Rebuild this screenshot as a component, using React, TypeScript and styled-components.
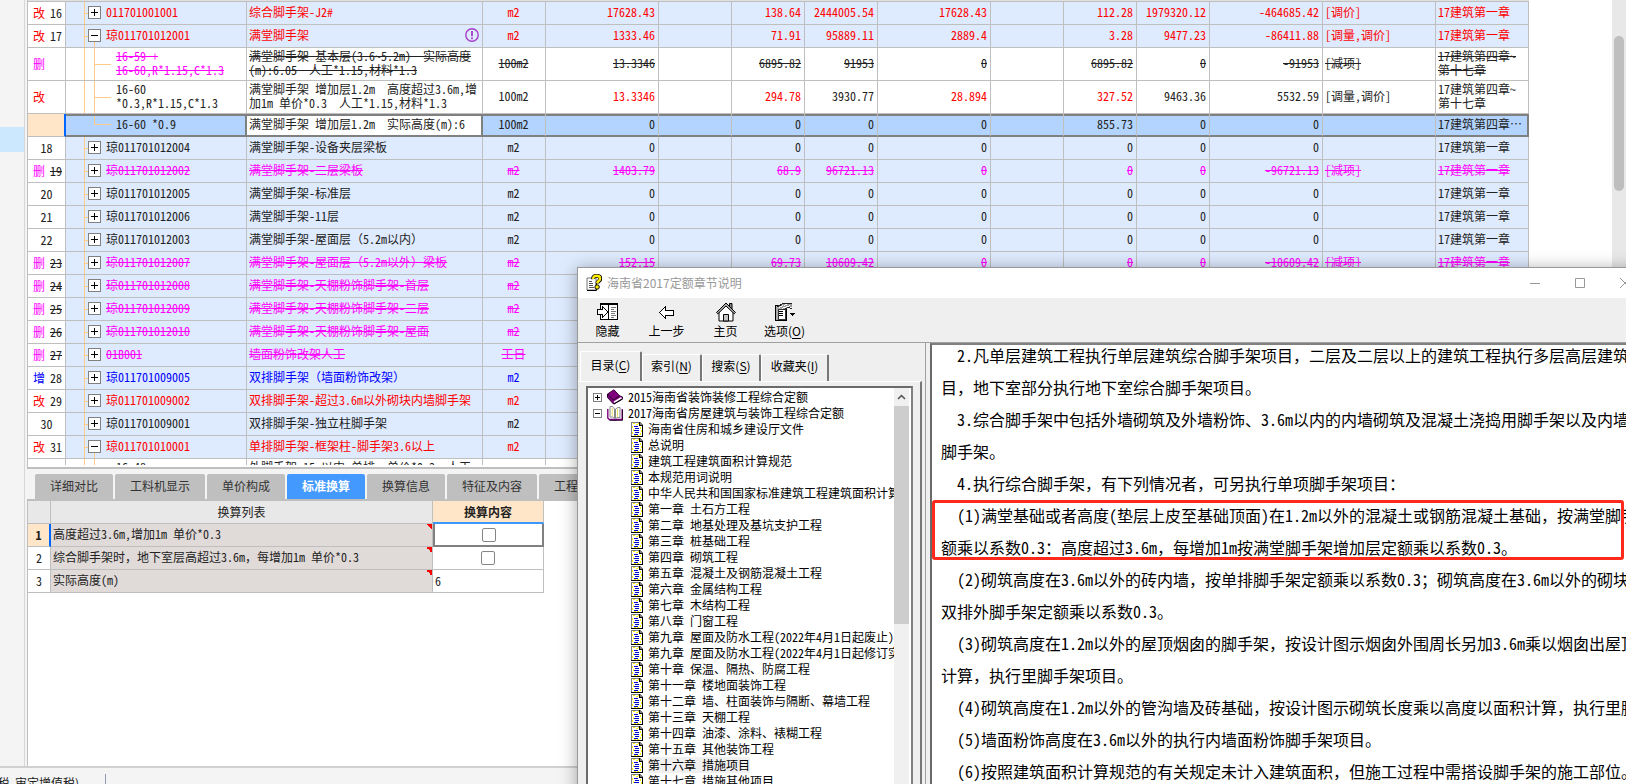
import React from "react";
import styled, { createGlobalStyle, css } from "styled-components";

const LINE = "#bfbfbf";
const DARK = "#808080";
const RED = "#ff0000";
const PINK = "#ff00ff";
const BLUE = "#0000ff";
const INK = "#222222";

const GlobalStyle = createGlobalStyle`
  * { box-sizing: border-box; }
  body {
    margin: 0;
    overflow: hidden;
    background: #f4f4f4;
    color: ${INK};
    font: 12px/14px "Noto Sans CJK SC", sans-serif;
    text-spacing-trim: space-all;
  }
  button, input { font: inherit; color: inherit; padding: 0; margin: 0; }
`;

/* Full-width punctuation keeps its full cell inside half-width Latin text. */
const Wide = styled.span`
  font-feature-settings: normal;
`;

function Txt({ children }: { children: string }) {
  return (
    <>
      {children.split(/([，（）；：]+)/).map((part, i) =>
        i % 2 ? <Wide key={i}>{part}</Wide> : part
      )}
    </>
  );
}

const Root = styled.div`
  position: relative;
  height: 100vh;
  overflow: hidden;
  display: flex;
  flex-direction: column;
`;

const Body = styled.div`
  flex: 1;
  min-height: 0;
  display: flex;
`;

const Gutter = styled.aside`
  width: 25px;
  flex: none;
  padding-top: 127px;
  border-right: 1px solid #d6d6d6;
`;

const GutterMark = styled.div`
  height: 25px;
  background: #cce8ff;
`;

const Main = styled.main`
  flex: 1;
  min-width: 0;
  margin-left: 2px;
  display: flex;
  flex-direction: column;
`;

const TopPane = styled.section`
  flex: 1;
  min-height: 0;
  display: flex;
  background: #fff;
  border-left: 1px solid ${LINE};
  border-bottom: 2px solid ${LINE};
`;

const GridView = styled.div`
  flex: 1;
  min-width: 0;
  overflow: hidden;
  border-bottom: 2px solid #fff;
`;

const GridTop = styled.div`
  width: 1501px;
  height: 1px;
  background: #e0e0e0;
`;

const VScroll = styled.div`
  width: 14px;
  flex: none;
  padding: 36px 2px 0;
  background: #e8e8e8;
`;

const VThumb = styled.div`
  height: 155px;
  border-radius: 5px;
  background: #bebebe;
`;

const Grid = styled.table`
  table-layout: fixed;
  width: 1501px;
  border-collapse: separate;
  border-spacing: 0;
  border-top: 1px solid ${LINE};
  font-feature-settings: "hwid";
`;

type RowKind = "item" | "child" | "selected";

const Row = styled.tr<{ $kind: RowKind }>`
  height: ${(p) => (p.$kind === "child" ? 33 : 23)}px;
  background: ${(p) =>
    p.$kind === "item" ? "#deeafe" : p.$kind === "child" ? "#fff" : "#b2d4ff"};
`;

const Cell = styled.td<{
  $align?: string;
  $color?: string;
  $strike?: boolean;
  $sel?: boolean;
  $white?: boolean;
}>`
  padding: 0 3px 2px 2px;
  border-right: 1px solid ${LINE};
  border-bottom: 1px solid ${LINE};
  overflow: hidden;
  white-space: pre;
  text-align: ${(p) => p.$align || "left"};
  color: ${(p) => p.$color || INK};
  text-decoration: ${(p) => (p.$strike ? "line-through" : "none")};
  ${(p) =>
    p.$sel &&
    css`
      border-bottom: 2px solid ${DARK};
      box-shadow: inset 0 2px ${DARK};
      &:last-child { border-right: 2px solid ${DARK}; }
    `}
  ${(p) =>
    p.$white &&
    css`
      background: #fff;
      border-right: 2px solid ${DARK};
    `}
`;

const NumCell = styled.th<{ $active?: boolean; $marked?: boolean }>`
  padding: 0 0 1px ${(p) => (p.$marked ? 5 : 0)}px;
  border-right: 1px solid ${LINE};
  border-bottom: 1px solid ${LINE};
  background: #fff;
  font-weight: 400;
  text-align: ${(p) => (p.$marked ? "left" : "center")};
  ${(p) =>
    p.$active &&
    css`
      background: #ffe6c8;
      border-right: 2px solid #0066ff;
    `}
`;

const Marker = styled.span<{ $color: string }>`
  margin-right: 5px;
  color: ${(p) => p.$color};
`;

const Num = styled.span<{ $strike?: boolean }>`
  text-decoration: ${(p) => (p.$strike ? "line-through" : "none")};
`;

/* The tree rails are painted as cell backgrounds: a trunk at 18px, a branch at 28px. */
const RAIL = "linear-gradient(#ffcc88, #ffcc88)";

const TreeCell = styled(Cell)<{ $rail: "leaf" | "open" | "child" | "last" }>`
  padding-left: ${(p) => (p.$rail === "leaf" || p.$rail === "open" ? 22 : 50)}px;
  background-repeat: no-repeat;
  ${(p) =>
    p.$sel &&
    css`
      border-right: 2px solid ${DARK};
    `}
  ${(p) =>
    p.$rail === "leaf" &&
    css`
      background-image: ${RAIL}, ${RAIL};
      background-size: 1px 100%, 4px 1px;
      background-position: 18px 0, 18px 50%;
    `}
  ${(p) =>
    p.$rail === "open" &&
    css`
      background-image: ${RAIL}, ${RAIL}, ${RAIL};
      background-size: 1px 100%, 4px 1px, 1px 50%;
      background-position: 18px 0, 18px 50%, 28px 100%;
    `}
  ${(p) =>
    p.$rail === "child" &&
    css`
      background-image: ${RAIL}, ${RAIL}, ${RAIL};
      background-size: 1px 100%, 17px 1px, 1px 100%;
      background-position: 18px 0, 28px 50%, 28px 0;
    `}
  ${(p) =>
    p.$rail === "last" &&
    css`
      background-image: ${RAIL}, ${RAIL};
      background-size: 17px 1px, 1px 50%;
      background-position: 28px 50%, 28px 0;
    `}
`;

const TreeLabel = styled.div`
  display: flex;
  align-items: center;
  gap: 5px;
`;

const NameLine = styled.div`
  display: flex;
  align-items: center;
  justify-content: space-between;
`;

const Expander = styled.button<{ $size: number }>`
  width: ${(p) => p.$size}px;
  height: ${(p) => p.$size}px;
  flex: none;
  display: block;
  border: 1px solid ${DARK};
  background: #fff;
  svg { display: block; }
`;

function Toggle({ open, size = 13 }: { open: boolean; size?: number }) {
  const inner = size - 2;
  const mid = (inner - 1) / 2;
  const inset = size > 9 ? 2 : 1;
  const len = inner - inset * 2;
  return (
    <Expander $size={size} aria-label={open ? "折叠" : "展开"}>
      <svg width={inner} height={inner} shapeRendering="crispEdges">
        <rect x={inset} y={mid} width={len} height={1} fill="#000" />
        {!open && <rect x={mid} y={inset} width={1} height={len} fill="#000" />}
      </svg>
    </Expander>
  );
}

interface Item {
  mark?: string;
  no?: string;
  kind?: RowKind;
  rail?: "leaf" | "open" | "child" | "last";
  code: string;
  name: string;
  unit: string;
  vals?: string[];
  note?: string;
  chapter?: string;
  color?: string;
  codeColor?: string;
  red?: number[];
  strike?: boolean;
  warn?: boolean;
}

const ZEROS = ["0", "", "0", "0", "0", "", "0", "0", "0"];
const CH1 = "17建筑第一章";

const plain = (no: string, code: string, name: string): Item => ({
  no, code, name, unit: "m2", vals: ZEROS, chapter: CH1,
});
const removed = (no: string, code: string, name: string, rest: Partial<Item> = {}): Item => ({
  mark: "删", no, code, name, unit: "m2", color: PINK, strike: true, ...rest,
});

const items: Item[] = [
  { mark: "改", no: "16", code: "011701001001", name: "综合脚手架-J2#", unit: "m2", color: RED,
    vals: ["17628.43", "", "138.64", "2444005.54", "17628.43", "", "112.28", "1979320.12", "-464685.42"],
    note: "[调价]", chapter: CH1 },
  { mark: "改", no: "17", rail: "open", code: "琼011701012001", name: "满堂脚手架", unit: "m2", color: RED, warn: true,
    vals: ["1333.46", "", "71.91", "95889.11", "2889.4", "", "3.28", "9477.23", "-86411.88"],
    note: "[调量,调价]", chapter: CH1 },
  { mark: "删", kind: "child", rail: "child", code: "16-59 +\n16-60,R*1.15,C*1.3", codeColor: PINK, strike: true,
    name: "满堂脚手架 基本层(3.6~5.2m)  实际高度\n(m):6.05  人工*1.15,材料*1.3", unit: "100m2",
    vals: ["13.3346", "", "6895.82", "91953", "0", "", "6895.82", "0", "-91953"],
    note: "[减项]", chapter: "17建筑第四章~\n第十七章" },
  { mark: "改", kind: "child", rail: "child", code: "16-60\n*0.3,R*1.15,C*1.3",
    name: "满堂脚手架 增加层1.2m  高度超过3.6m,增\n加1m 单价*0.3  人工*1.15,材料*1.3", unit: "100m2",
    vals: ["13.3346", "", "294.78", "3930.77", "28.894", "", "327.52", "9463.36", "5532.59"],
    red: [0, 2, 4, 6], note: "[调量,调价]", chapter: "17建筑第四章~\n第十七章" },
  { kind: "selected", rail: "last", code: "16-60 *0.9", name: "满堂脚手架 增加层1.2m  实际高度(m):6", unit: "100m2",
    vals: ["0", "", "0", "0", "0", "", "855.73", "0", "0"], chapter: "17建筑第四章…" },
  plain("18", "琼011701012004", "满堂脚手架-设备夹层梁板"),
  removed("19", "琼011701012002", "满堂脚手架-二层梁板", {
    vals: ["1403.79", "", "68.9", "96721.13", "0", "", "0", "0", "-96721.13"],
    note: "[减项]", chapter: CH1 }),
  plain("20", "琼011701012005", "满堂脚手架-标准层"),
  plain("21", "琼011701012006", "满堂脚手架-11层"),
  plain("22", "琼011701012003", "满堂脚手架-屋面层（5.2m以内）"),
  removed("23", "琼011701012007", "满堂脚手架-屋面层（5.2m以外）梁板", {
    vals: ["152.15", "", "69.73", "10609.42", "0", "", "0", "0", "-10609.42"],
    note: "[减项]", chapter: CH1 }),
  removed("24", "琼011701012008", "满堂脚手架-天棚粉饰脚手架-首层"),
  removed("25", "琼011701012009", "满堂脚手架-天棚粉饰脚手架-二层"),
  removed("26", "琼011701012010", "满堂脚手架-天棚粉饰脚手架-屋面"),
  removed("27", "01B001", "墙面粉饰改架人工", { unit: "工日" }),
  { mark: "增", no: "28", code: "琼011701009005", name: "双排脚手架（墙面粉饰改架）", unit: "m2", color: BLUE },
  { mark: "改", no: "29", code: "琼011701009002", name: "双排脚手架-超过3.6m以外砌块内墙脚手架", unit: "m2", color: RED },
  { no: "30", code: "琼011701009001", name: "双排脚手架-独立柱脚手架", unit: "m2" },
  { mark: "改", no: "31", rail: "open", code: "琼011701010001", name: "单排脚手架-框架柱-脚手架3.6以上", unit: "m2", color: RED },
  { kind: "child", rail: "child", code: "16-48\n*0.3", name: "外脚手架 15m以内 单排  单价*0.3  人工\n*1.15", unit: "" },
];

const colWidths = [38, 181, 236, 63, 113, 73, 73, 73, 113, 73, 73, 73, 113, 113, 93];
const markColors: Record<string, string> = { 改: RED, 删: PINK, 增: BLUE };

function WarnIcon() {
  return (
    <svg width="14" height="14" viewBox="0 0 14 14" fill="none" stroke="#a63cc8">
      <circle cx="7" cy="7" r="6.2" strokeWidth="1.4" />
      <path d="M7 3v5.2M7 9.6v1.6" strokeWidth="1.8" />
    </svg>
  );
}

function ItemRow({ item }: { item: Item }) {
  const kind = item.kind || "item";
  const rail = item.rail || "leaf";
  const sel = kind === "selected";
  const vals = item.vals || Array(9).fill("");
  const common = { $sel: sel, $strike: item.strike };
  return (
    <Row $kind={kind}>
      <NumCell scope="row" $active={sel} $marked={!!item.mark}>
        {item.mark && <Marker $color={markColors[item.mark]}>{item.mark}</Marker>}
        <Num $strike={item.strike}>{item.no}</Num>
      </NumCell>
      <TreeCell {...common} $rail={rail} $color={item.codeColor || item.color}>
        {kind === "item" ? (
          <TreeLabel>
            <Toggle open={rail === "open"} />
            {item.code}
          </TreeLabel>
        ) : (
          item.code
        )}
      </TreeCell>
      <Cell {...common} $white={sel} $color={item.color}>
        {item.warn ? (
          <NameLine>
            {item.name}
            <WarnIcon />
          </NameLine>
        ) : (
          <Txt>{item.name}</Txt>
        )}
      </Cell>
      <Cell {...common} $align="center" $color={item.color}>{item.unit}</Cell>
      {vals.map((v, i) => (
        <Cell key={i} {...common} $align="right" $color={item.red?.includes(i) ? RED : item.color}>{v}</Cell>
      ))}
      <Cell {...common} $color={item.color}>{item.note}</Cell>
      <Cell {...common} $color={item.color}>{item.chapter}</Cell>
    </Row>
  );
}

/* ---------- lower pane ---------- */

const BottomPane = styled.section`
  flex: none;
  height: 297px;
  display: flex;
  flex-direction: column;
`;

const TabBar = styled.div`
  display: flex;
  gap: 2px;
  padding: 5px 0 0 8px;
`;

const PaneTab = styled.button<{ $active?: boolean }>`
  flex: none;
  height: 25px;
  padding: 0 15px 2px;
  border: 0;
  border-radius: 2px 2px 0 0;
  white-space: nowrap;
  background: ${(p) => (p.$active ? "#4499ff" : "#bfbfbf")};
  color: ${(p) => (p.$active ? "#fff" : "#333")};
  font-weight: ${(p) => (p.$active ? 700 : 400)};
`;

const PaneBody = styled.div`
  flex: 1;
  background: #fff;
  border-left: 1px solid ${LINE};
  border-top: 2px solid ${LINE};
`;

const ConvTable = styled.table`
  table-layout: fixed;
  width: 516px;
  border-collapse: separate;
  border-spacing: 0;
  font-feature-settings: "hwid";
  tr { height: 23px; }
`;

const ConvHead = styled.th<{ $hot?: boolean }>`
  padding: 0;
  font-weight: ${(p) => (p.$hot ? 700 : 400)};
  background: ${(p) => (p.$hot ? "#ffe6c8" : "#e8e8e8")};
  border-right: 1px solid ${LINE};
  border-bottom: ${(p) => (p.$hot ? "2px solid #3b97fb" : `1px solid ${LINE}`)};
`;

const ConvNo = styled.th<{ $active?: boolean }>`
  padding: 0;
  font-weight: ${(p) => (p.$active ? 700 : 400)};
  background: ${(p) => (p.$active ? "#ffe6c8" : "#fff")};
  border-right: ${(p) => (p.$active ? "2px solid #0066ff" : `1px solid ${LINE}`)};
  border-bottom: 1px solid ${LINE};
`;

const ConvName = styled.td`
  padding: 0 0 2px 2px;
  white-space: pre;
  border-right: 1px solid ${LINE};
  border-bottom: 1px solid ${LINE};
  background: linear-gradient(45deg, transparent 50%, #ff0000 50%) 100% 0 / 6px 6px no-repeat #e0dad8;
`;

const ConvValue = styled.td<{ $active?: boolean }>`
  padding: 0 2px;
  border-right: 1px solid ${LINE};
  border-bottom: 1px solid ${LINE};
  ${(p) =>
    p.$active &&
    css`
      border: 2px solid ${DARK};
      border-top: 0;
    `}
`;

const Check = styled.input`
  appearance: none;
  display: block;
  width: 14px;
  height: 14px;
  margin: 0 auto;
  border: 1px solid #858585;
  border-radius: 2px;
  background: #fff;
`;

const StatusBar = styled.footer`
  flex: none;
  height: 18px;
  display: flex;
  align-items: flex-start;
  overflow: hidden;
  border-top: 2px solid #d0d0d0;
`;

const StatusText = styled.div`
  width: 79px;
  height: 16px;
  padding-top: 8px;
  display: flex;
  justify-content: flex-end;
  white-space: pre;
  overflow: hidden;
`;

const StatusDivider = styled.div`
  height: 12px;
  margin: 6px 0 0 26px;
  border-left: 1px solid #8f9bb0;
`;

/* ---------- help window ---------- */

const HelpWindow = styled.section`
  position: absolute;
  left: 577px;
  top: 267px;
  right: -22px;
  bottom: -20px;
  display: flex;
  flex-direction: column;
  border: 1px solid #999;
  background: #efefef;
  color: #000;
  box-shadow: 0 2px 16px rgba(0, 0, 0, 0.35);
`;

const TitleBar = styled.header`
  flex: none;
  height: 30px;
  padding: 0 0 1px 8px;
  display: flex;
  align-items: center;
  gap: 5px;
  background: #fff;
  color: #999;
  h1 {
    margin: 0;
    flex: 1;
    font-size: 12px;
    line-height: 14px;
    font-weight: 400;
  }
`;

const WinButtons = styled.div`
  display: flex;
`;

const WinButton = styled.button`
  width: 45px;
  height: 28px;
  display: flex;
  align-items: center;
  justify-content: center;
  border: 0;
  background: none;
`;

const HelpTools = styled.nav`
  flex: none;
  height: 45px;
  padding-top: 4px;
  display: flex;
  align-items: flex-start;
  border-bottom: 1px solid #a0a0a0;
`;

const Tool = styled.button`
  width: 59px;
  height: 38px;
  display: flex;
  flex-direction: column;
  align-items: center;
  gap: 2px;
  border: 0;
  background: none;
  white-space: nowrap;
  u { text-underline-offset: 2px; }
`;

const HelpBody = styled.div`
  flex: 1;
  min-height: 0;
  display: flex;
`;

const Nav = styled.aside`
  width: 348px;
  flex: none;
  display: flex;
  flex-direction: column;
  padding-top: 8px;
  border-right: 1px solid #a0a0a0;
`;

const HelpTabs = styled.div`
  display: flex;
  align-items: flex-end;
  height: 30px;
  padding-left: 2px;
`;

const HelpTab = styled.button<{ $active?: boolean; $w: number }>`
  width: ${(p) => p.$w}px;
  height: ${(p) => (p.$active ? 30 : 27)}px;
  padding-bottom: 4px;
  border: 0;
  border-top: 1px solid #fff;
  border-left: 1px solid #fff;
  border-right: 2px solid #777;
  border-radius: 2px 2px 0 0;
  background: none;
  white-space: nowrap;
  u { text-underline-offset: 2px; }
`;

const NavPage = styled.div`
  flex: 1;
  min-height: 0;
  display: flex;
  padding: 4px 7px 0 8px;
  margin-right: 3px;
  border-top: 1px solid #fff;
  border-right: 2px solid #777;
`;

const TreeBox = styled.div`
  flex: 1;
  min-width: 0;
  display: flex;
  padding-right: 2px;
  border: 2px solid;
  border-color: #6b6b6b #808080 #808080 #6b6b6b;
  background: #fff;
`;

const TreeList = styled.ul`
  flex: 1;
  min-width: 0;
  margin: 0;
  padding: 1px 0 0 5px;
  list-style: none;
  overflow: hidden;
  font-feature-settings: "hwid";
  line-height: 16px;
  ul {
    margin: 0;
    padding: 0 0 0 38px;
    list-style: none;
  }
`;

const Node = styled.div<{ $current?: boolean }>`
  display: flex;
  align-items: center;
  height: 16px;
  gap: 5px;
  white-space: pre;
  svg { flex: none; }
  span { background: ${(p) => (p.$current ? "#f0f0f0" : "none")}; }
`;

const NavScroll = styled.div`
  width: 15px;
  flex: none;
  background: #f0f0f0;
`;

const NavArrow = styled.button`
  width: 15px;
  height: 18px;
  display: flex;
  align-items: center;
  justify-content: center;
  border: 0;
  background: none;
`;

const NavThumb = styled.div`
  height: 218px;
  background: #cdcdcd;
`;

const Doc = styled.article`
  flex: 1;
  min-width: 0;
  margin-left: 4px;
  overflow: hidden;
  background: #fff;
  border-left: 2px solid #696969;
  border-top: 2px solid #808080;
`;

const DocFlow = styled.div`
  margin-top: -6px;
  padding-left: 9px;
  font-size: 16px;
  line-height: 32px;
  font-feature-settings: "hwid";
`;

const Para = styled.p<{ $boxed?: boolean }>`
  position: relative;
  margin: 0;
  text-indent: 16px;
  white-space: pre;
  ${(p) =>
    p.$boxed &&
    css`
      &::after {
        content: "";
        position: absolute;
        inset: 1px 23px 3px -9px;
        border: 3px solid #ff2a1c;
        border-radius: 3px;
      }
    `}
`;

function HelpIcon() {
  return (
    <svg width="16" height="17" viewBox="0 0 16 17">
      <path d="M1 4h9v12H1z" fill="#fff" stroke="#777" />
      <path d="M10.5 9v7.5H1" fill="none" stroke="#000" />
      <path d="M3 7.5h3M3 9.5h4M3 11.5h4M3 13.5h5" stroke="#555" />
      <path d="M7.2 5.2C7 2.6 8.6 1.8 10.6 1.8s3.7 1 3.7 3c0 2.2-2.9 2.3-2.9 4.6" fill="none" stroke="#000" strokeWidth="4" />
      <path d="M7.2 5C7 2.6 8.6 1.8 10.6 1.8s3.5 1 3.5 3c0 2.2-2.9 2.3-2.9 4.4" fill="none" stroke="#ffee00" strokeWidth="2.4" />
      <circle cx="11.1" cy="13" r="2.2" fill="#ffee00" stroke="#000" />
    </svg>
  );
}

function HideIcon() {
  return (
    <svg width="22" height="20" viewBox="0 0 22 20" shapeRendering="crispEdges">
      <path d="M3.5 1.5h17v16h-17z" fill="#fff" stroke="#000" />
      <path d="M3 2.5h18" stroke="#000" />
      <path d="M11.5 2v16" stroke="#000" />
      <path d="M14 5.5h5M14 7.5h3M14 9.5h5M14 11.5h4M14 13.5h5M14 15.5h3" stroke="#777" />
      <path d="M.5 7.5h5v-3l5.500 5.500-5.500 5.500v-3h-5z" fill="#fff" stroke="#000" />
    </svg>
  );
}

function BackIcon() {
  return (
    <svg width="18" height="20" viewBox="0 0 18 20" shapeRendering="crispEdges">
      <path d="M1.500 10.500L7.500 4.500v3.500h8v5h-8v3.500z" fill="#fff" stroke="#000" />
    </svg>
  );
}

function HomeIcon() {
  return (
    <svg width="22" height="20" viewBox="0 0 22 20">
      <path d="M14.500 6V1.500h2.500V9" fill="#888" stroke="#000" />
      <path d="M4 9.500l7-6.500 7 6.500v9.500H4z" fill="#fff" stroke="#000" />
      <path d="M1.500 10.500L11 1l9.500 9.500-1.300 1.300L11 4l-8.200 7.800z" fill="#aaa" stroke="#000" />
      <path d="M8.500 19v-6.500h5V19z" fill="#c4c4c4" stroke="#000" />
    </svg>
  );
}

function OptionsIcon() {
  return (
    <svg width="22" height="20" viewBox="0 0 22 20" shapeRendering="crispEdges">
      <path d="M1.500 3.500h11v15h-11z" fill="#aaa" stroke="#000" />
      <path d="M4 7h7v10H4z" fill="#fff" stroke="#333" />
      <path d="M5 9.500h4M5 11.500h4M5 13.500h4" stroke="#000" />
      <path d="M4 6l6-5h8v4l-4 1-4 2-2-2z" fill="#999" />
      <path d="M5 5.500l4-2M10 3.500l4-2M8 6.500l8-3" stroke="#fff" />
      <path d="M3.500 4.500L9 1.500h9M10 7.500l4-2 4 1" stroke="#222" fill="none" />
      <path d="M16 11h5l-2.500 3z" fill="#000" />
    </svg>
  );
}

function ClosedBook() {
  return (
    <svg width="16" height="16" viewBox="0 0 16 16">
      <path d="M.5 5L7 .8l5.500 6-6.200 4.500z" fill="#800080" stroke="#400040" />
      <path d="M.5 5v3.500l6 6.500 9-5V8l-3-1.200-6.200 4.500z" fill="#800080" stroke="#300030" />
      <path d="M7 13.200l7.500-4.400" stroke="#fff" strokeWidth="1.600" />
      <path d="M7 15l8.500-5" stroke="#000" />
    </svg>
  );
}

function OpenBook() {
  return (
    <svg width="16" height="16" viewBox="0 0 16 16">
      <path d="M.8 4v9l1.500 1.500h5L8 15.200l1-.8h6.200V4" fill="#fff" stroke="#800080" strokeWidth="1.400" />
      <path d="M3 1.500h2.500L7.500 4v9.500L5.500 12H3zM13 2.500h-2L8.500 4v9.500l2-1H13z" fill="#fff" stroke="#888" />
      <path d="M10.500 4v8M5.200 3v8" stroke="#e8e060" />
      <path d="M2.500 15.300h13V5" fill="none" stroke="#300030" />
    </svg>
  );
}

function PageIcon() {
  return (
    <svg width="12" height="15" viewBox="0 0 12 15" shapeRendering="crispEdges">
      <path d="M0 0h9l3 3v12H0z" fill="#808080" />
      <path d="M1 1h8v2h2v11H1z" fill="#fff" />
      <path d="M2 1h2v1H2zM5 2h2v1H5zM7 1h1v1H7zM1 4h1v2H1zM2 7h1v2H2zM1 10h1v2H1zM9 5h1v2H9zM10 8h1v2h-1zM9 11h1v2H9zM3 13h2v1H3zM6 13h2v1H6z" fill="#ffee00" />
      <path d="M3 4h4v1H3zM4 6h4v1H4zM3 8h5v1H3zM4 10h4v1H4zM3 12h4v1H3z" fill="#0000cc" />
      <path d="M8 0h1v3h3v12H0v-1h11V4H8z" fill="#000" />
    </svg>
  );
}

const chapters = [
  "海南省住房和城乡建设厅文件",
  "总说明",
  "建筑工程建筑面积计算规范",
  "本规范用词说明",
  "中华人民共和国国家标准建筑工程建筑面积计算规范",
  "第一章 土石方工程",
  "第二章 地基处理及基坑支护工程",
  "第三章 桩基础工程",
  "第四章 砌筑工程",
  "第五章 混凝土及钢筋混凝土工程",
  "第六章 金属结构工程",
  "第七章 木结构工程",
  "第八章 门窗工程",
  "第九章 屋面及防水工程(2022年4月1日起废止)",
  "第九章 屋面及防水工程(2022年4月1日起修订实施)",
  "第十章 保温、隔热、防腐工程",
  "第十一章 楼地面装饰工程",
  "第十二章 墙、柱面装饰与隔断、幕墙工程",
  "第十三章 天棚工程",
  "第十四章 油漆、涂料、裱糊工程",
  "第十五章 其他装饰工程",
  "第十六章 措施项目",
  "第十七章 措施其他项目",
];

const paragraphs = [
  "2.凡单层建筑工程执行单层建筑综合脚手架项目，二层及二层以上的建筑工程执行多层高层建筑\n目，地下室部分执行地下室综合脚手架项目。",
  "3.综合脚手架中包括外墙砌筑及外墙粉饰、3.6m以内的内墙砌筑及混凝土浇捣用脚手架以及内墙\n脚手架。",
  "4.执行综合脚手架，有下列情况者，可另执行单项脚手架项目：",
  "(1)满堂基础或者高度(垫层上皮至基础顶面)在1.2m以外的混凝土或钢筋混凝土基础，按满堂脚手\n额乘以系数0.3：高度超过3.6m，每增加1m按满堂脚手架增加层定额乘以系数0.3。",
  "(2)砌筑高度在3.6m以外的砖内墙，按单排脚手架定额乘以系数0.3；砌筑高度在3.6m以外的砌块\n双排外脚手架定额乘以系数0.3。",
  "(3)砌筑高度在1.2m以外的屋顶烟囱的脚手架，按设计图示烟囱外围周长另加3.6m乘以烟囱出屋顶\n计算，执行里脚手架项目。",
  "(4)砌筑高度在1.2m以外的管沟墙及砖基础，按设计图示砌筑长度乘以高度以面积计算，执行里脚",
  "(5)墙面粉饰高度在3.6m以外的执行内墙面粉饰脚手架项目。",
  "(6)按照建筑面积计算规范的有关规定未计入建筑面积，但施工过程中需搭设脚手架的施工部位。",
];

function Help() {
  return (
    <HelpWindow aria-label="海南省2017定额章节说明">
      <TitleBar>
        <HelpIcon />
        <h1>海南省2017定额章节说明</h1>
        <WinButtons>
          <WinButton aria-label="最小化">
            <svg width="10" height="10"><path d="M0 5.500h10" stroke="#999" /></svg>
          </WinButton>
          <WinButton aria-label="最大化">
            <svg width="10" height="10"><path d="M.5.5h9v9h-9z" fill="none" stroke="#999" /></svg>
          </WinButton>
          <WinButton aria-label="关闭">
            <svg width="10" height="10"><path d="M0 0l10 10M10 0L0 10" stroke="#999" /></svg>
          </WinButton>
        </WinButtons>
      </TitleBar>
      <HelpTools>
        <Tool><HideIcon />隐藏</Tool>
        <Tool><BackIcon />上一步</Tool>
        <Tool><HomeIcon />主页</Tool>
        <Tool><OptionsIcon /><span>选项(<u>O</u>)</span></Tool>
      </HelpTools>
      <HelpBody>
        <Nav>
          <HelpTabs>
            <HelpTab $active $w={62}>目录(<u>C</u>)</HelpTab>
            <HelpTab $w={60}>索引(<u>N</u>)</HelpTab>
            <HelpTab $w={59}>搜索(<u>S</u>)</HelpTab>
            <HelpTab $w={68}>收藏夹(<u>I</u>)</HelpTab>
          </HelpTabs>
          <NavPage>
            <TreeBox>
              <TreeList>
                <li>
                  <Node><Toggle open={false} size={9} /><ClosedBook /><span>2015海南省装饰装修工程综合定额</span></Node>
                </li>
                <li>
                  <Node><Toggle open size={9} /><OpenBook /><span>2017海南省房屋建筑与装饰工程综合定额</span></Node>
                  <ul>
                    {chapters.map((c) => (
                      <li key={c}>
                        <Node $current={c === "第十六章 措施项目"}><PageIcon /><span>{c}</span></Node>
                      </li>
                    ))}
                  </ul>
                </li>
              </TreeList>
              <NavScroll>
                <NavArrow aria-label="向上滚动">
                  <svg width="9" height="6"><path d="M1 5l3.500-3.500L8 5" fill="none" stroke="#505050" strokeWidth="1.500" /></svg>
                </NavArrow>
                <NavThumb />
              </NavScroll>
            </TreeBox>
          </NavPage>
        </Nav>
        <Doc>
          <DocFlow>
            {paragraphs.map((p, i) => (
              <Para key={i} $boxed={i === 3}><Txt>{p}</Txt></Para>
            ))}
          </DocFlow>
        </Doc>
      </HelpBody>
    </HelpWindow>
  );
}

const paneTabs = ["详细对比", "工料机显示", "单价构成", "标准换算", "换算信息", "特征及内容", "工程量明细"];

export default function App() {
  return (
    <Root>
      <GlobalStyle />
      <Body>
        <Gutter><GutterMark /></Gutter>
        <Main>
          <TopPane>
            <GridView>
              <GridTop />
              <Grid>
                <colgroup>
                  {colWidths.map((w, i) => <col key={i} width={w} />)}
                </colgroup>
                <tbody>
                  {items.map((it, i) => <ItemRow key={i} item={it} />)}
                </tbody>
              </Grid>
            </GridView>
            <VScroll><VThumb /></VScroll>
          </TopPane>
          <BottomPane>
            <TabBar>
              {paneTabs.map((t) => (
                <PaneTab key={t} $active={t === "标准换算"}>{t}</PaneTab>
              ))}
            </TabBar>
            <PaneBody>
              <ConvTable>
                <colgroup><col width={23} /><col width={382} /><col width={111} /></colgroup>
                <thead>
                  <tr>
                    <ConvHead aria-label="序号" />
                    <ConvHead scope="col">换算列表</ConvHead>
                    <ConvHead scope="col" $hot>换算内容</ConvHead>
                  </tr>
                </thead>
                <tbody>
                  <tr>
                    <ConvNo scope="row" $active>1</ConvNo>
                    <ConvName><label htmlFor="conv1">高度超过3.6m,增加1m 单价*0.3</label></ConvName>
                    <ConvValue $active><Check type="checkbox" id="conv1" /></ConvValue>
                  </tr>
                  <tr>
                    <ConvNo scope="row">2</ConvNo>
                    <ConvName><label htmlFor="conv2"><Txt>综合脚手架时，地下室层高超过3.6m，每增加1m 单价*0.3</Txt></label></ConvName>
                    <ConvValue><Check type="checkbox" id="conv2" /></ConvValue>
                  </tr>
                  <tr>
                    <ConvNo scope="row">3</ConvNo>
                    <ConvName>实际高度(m)</ConvName>
                    <ConvValue>6</ConvValue>
                  </tr>
                </tbody>
              </ConvTable>
            </PaneBody>
          </BottomPane>
        </Main>
      </Body>
      <StatusBar>
        <StatusText>税  审定增值税)</StatusText>
        <StatusDivider />
      </StatusBar>
      <Help />
    </Root>
  );
}
